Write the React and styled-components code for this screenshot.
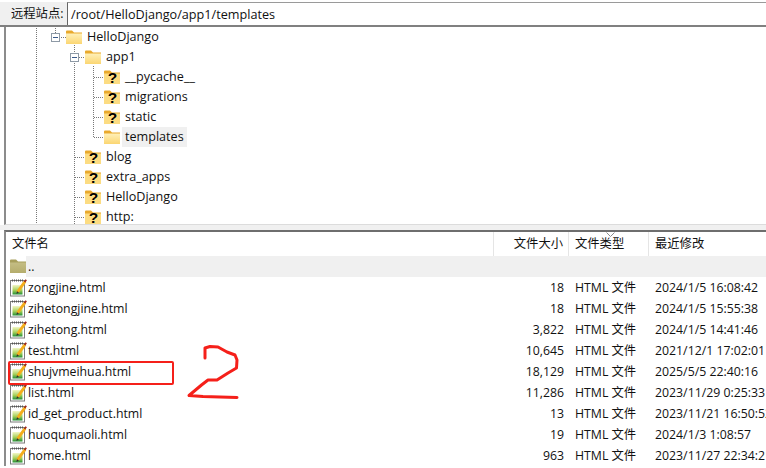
import React from "react";
import styled, { createGlobalStyle } from "styled-components";

const FONT = `"Open Sans", "Noto Sans CJK SC", sans-serif`;

const treeRows = [
  { name: "HelloDjango", depth: 0, icon: "folder" },
  { name: "app1", depth: 1, icon: "folder" },
  { name: "__pycache__", depth: 2, icon: "unknown" },
  { name: "migrations", depth: 2, icon: "unknown" },
  { name: "static", depth: 2, icon: "unknown" },
  { name: "templates", depth: 2, icon: "folder", selected: true },
  { name: "blog", depth: 1, icon: "unknown" },
  { name: "extra_apps", depth: 1, icon: "unknown" },
  { name: "HelloDjango", depth: 1, icon: "unknown" },
  { name: "http:", depth: 1, icon: "unknown" },
];

const files = [
  { name: "zongjine.html", size: "18", date: "2024/1/5 16:08:42" },
  { name: "zihetongjine.html", size: "18", date: "2024/1/5 15:55:38" },
  { name: "zihetong.html", size: "3,822", date: "2024/1/5 14:41:46" },
  { name: "test.html", size: "10,645", date: "2021/12/1 17:02:01" },
  { name: "shujvmeihua.html", size: "18,129", date: "2025/5/5 22:40:16" },
  { name: "list.html", size: "11,286", date: "2023/11/29 0:25:33" },
  { name: "id_get_product.html", size: "13", date: "2023/11/21 16:50:52" },
  { name: "huoqumaoli.html", size: "19", date: "2024/1/3 1:08:57" },
  { name: "home.html", size: "963", date: "2023/11/27 22:34:21" },
];

const FolderIcon = ({ color = "yellow" }) => {
  const olive = color === "olive";
  return (
    <svg width="16" height="14" viewBox="0 0 16 14">
      <defs>
        <linearGradient id={`fold-${color}`} x1="0" y1="0" x2="0" y2="1">
          <stop offset="0" stopColor={olive ? "#c4bd84" : "#fff0b8"} />
          <stop offset="1" stopColor={olive ? "#b5ad6c" : "#fbd672"} />
        </linearGradient>
      </defs>
      <path d="M0 1.5 Q0 .5 1 .5 H6 L8 2.5 H16 V14 H0 Z" fill={olive ? "#a89f5c" : "#e9a92c"} />
      <rect x="0" y="3.5" width="16" height="10.5" fill={`url(#fold-${color})`} />
    </svg>
  );
};

// the question mark is taller than the folder box, so it may spill over the svg edge
const UnknownIcon = () => (
  <UnknownSvg width="16" height="14" viewBox="0 0 16 14">
    <path d="M0 1.5 Q0 .5 1 .5 H6 L8 2.5 H16 V14 H0 Z" fill="#e9a92c" />
    <rect x="0" y="3.5" width="16" height="10.5" fill="#fcdc82" />
    <text x="8.4" y="12.8" textAnchor="middle" fontFamily="Liberation Sans" fontWeight="700" fontSize="15.5" fill="#000">?</text>
  </UnknownSvg>
);

const FileIcon = () => (
  <svg width="17" height="18" viewBox="0 0 17 18">
    <defs>
      <linearGradient id="sheet" x1="0" y1="0" x2="0" y2="1">
        <stop offset="0" stopColor="#f2f6c4" />
        <stop offset="0.55" stopColor="#a6d05a" />
        <stop offset="1" stopColor="#238f34" />
      </linearGradient>
    </defs>
    <rect x="0.5" y="1.5" width="14" height="15.5" fill="#fff" stroke="#7d7d7d" />
    <path d="M2 1.5 H13" stroke="#555" strokeDasharray="1 1" strokeWidth="2" />
    <rect x="2.5" y="6" width="10" height="9.5" fill="url(#sheet)" />
    <path d="M7.5 13 L15 2.5" stroke="#f4ae1c" strokeWidth="3" />
    <path d="M14.6 3 L16.2 .8" stroke="#a02818" strokeWidth="1.8" />
    <path d="M6.4 15 L7 12.2 L9 13.6 Z" fill="#333" />
  </svg>
);

const App = () => {
  return (
    <>
      <GlobalStyle />
      <Page>
        <AddressBar>
          <AddressLabel>远程站点:</AddressLabel>
          <AddressInput>/root/HelloDjango/app1/templates</AddressInput>
        </AddressBar>

        <TreePanel>
          <TreeLines width="300" height="198" viewBox="0 26 300 198">
            <g stroke="#777" strokeDasharray="1 1" fill="none">
              <path d="M36.5 26 V224" />
              <path d="M55.5 26 V33" />
              <path d="M74.5 41 V53 M74.5 61 V224" />
              <path d="M93.5 66 V137" />
              <path d="M59 37.5 H66 M79 57.5 H85" />
              <path d="M94 77.5 H104 M94 97.5 H104 M94 117.5 H104 M94 137.5 H104" />
              <path d="M75 157.5 H85 M75 177.5 H85 M75 197.5 H85 M75 217.5 H85" />
            </g>
            <Expander x={51} y={33} />
            <Expander x={70} y={53} />
          </TreeLines>
          {treeRows.map(({ name, depth, icon, selected }, i) => (
            <TreeRow key={i} $depth={depth}>
              {icon === "folder" ? <FolderIcon /> : <UnknownIcon />}
              <TreeName $selected={selected}>{name}</TreeName>
            </TreeRow>
          ))}
        </TreePanel>

        <Splitter />

        <ListPanel>
          <ListHeader>
            <NameHead>文件名</NameHead>
            <SizeHead>文件大小</SizeHead>
            <TypeHead>
              <SortArrow width="9" height="5" viewBox="0 0 9 5">
                <path d="M.5 .5 L4.5 4.5 L8.5 .5" fill="none" stroke="#8a8a8a" />
              </SortArrow>
              文件类型
            </TypeHead>
            <DateHead>最近修改</DateHead>
          </ListHeader>
          <ParentRow>
            <ParentIcon>
              <FolderIcon color="olive" />
            </ParentIcon>
            <ParentName>..</ParentName>
          </ParentRow>
          {files.map(({ name, size, date }) => (
            <FileRow key={name}>
              <NameCell>
                <FileIcon />
                {name}
              </NameCell>
              <SizeCell>{size}</SizeCell>
              <TypeCell>HTML 文件</TypeCell>
              <DateCell>{date}</DateCell>
            </FileRow>
          ))}
        </ListPanel>

        <RedBox />
        <Scribble width="60" height="60" viewBox="185 342 60 60">
          <path
            d="M205 358 L205 348 L210 346.5 L218 347 L227 352 L235 355 L237 360 L236.5 368 L228 373 L217 380 L208 380 L201.5 385 L189 395.5 L203 396.5 L237 397.5"
            fill="none"
            stroke="#f5201a"
            strokeWidth="3"
            strokeLinejoin="round"
            strokeLinecap="round"
          />
        </Scribble>
      </Page>
    </>
  );
};

const Expander = ({ x, y }) => (
  <g>
    <rect x={x + 0.5} y={y + 0.5} width="8" height="8" fill="#fff" stroke="#8e9aa6" />
    <path d={`M${x + 2} ${y + 4.5} H${x + 7}`} stroke="#3a5a8a" />
  </g>
);

export default App;

const GlobalStyle = createGlobalStyle`
  html, body {
    margin: 0;
    background: #fff;
    overflow: hidden;
  }
`;

const Page = styled.div`
  position: relative;
  width: 766px;
  height: 468px;
  overflow: hidden;
  font-family: ${FONT};
  font-size: 12.3px;
  color: #111;
  background: #fff;
`;

const AddressBar = styled.div`
  display: flex;
  height: 23px;
  margin-top: 2px;
  border-bottom: 2px solid #808080;
  box-sizing: content-box;
`;

const AddressLabel = styled.div`
  width: 67px;
  padding-left: 11px;
  box-sizing: border-box;
  background: #f0f0f0;
  line-height: 24px;
  white-space: nowrap;
`;

const AddressInput = styled.div`
  flex: 1;
  padding-left: 3px;
  border-left: 1px solid #666;
  border-top: 1px solid #9a9a9a;
  font-size: 12.65px;
  line-height: 22px;
`;

const TreePanel = styled.div`
  position: relative;
  height: 197px;
  margin-left: 4px;
  border-left: 2px solid #8c8c8c;
  border-bottom: 1px solid #dcdcdc;
  overflow: hidden;
`;

const TreeLines = styled.svg`
  position: absolute;
  left: -6px;
  top: -1px;
`;

const TreeRow = styled.div`
  position: relative;
  display: flex;
  align-items: center;
  height: 20px;
  padding-left: ${({ $depth }) => 60 + $depth * 19}px;
  font-size: 12.6px;
`;

const UnknownSvg = styled.svg`
  overflow: visible;
`;

const TreeName = styled.span`
  margin-left: 2px;
  padding: 0 3px;
  line-height: 20px;
  background: ${({ $selected }) => ($selected ? "#f0f0f0" : "transparent")};
`;

const Splitter = styled.div`
  height: 5px;
  background: #f0f0f0;
`;

const ListPanel = styled.div`
  margin-left: 4px;
  border-left: 2px solid #8c8c8c;
  border-top: 2px solid #6e6e6e;
`;

const ListHeader = styled.div`
  display: flex;
  height: 24px;
  line-height: 24px;
`;

const HeadCell = styled.div`
  box-sizing: border-box;
  height: 24px;
  white-space: nowrap;
  border-right: 1px solid #e5e5e5;
`;

const NameHead = styled(HeadCell)`
  width: 488px;
  padding-left: 6px;
`;

const SizeHead = styled(HeadCell)`
  width: 75px;
  padding-right: 5px;
  text-align: right;
`;

const TypeHead = styled(HeadCell)`
  position: relative;
  width: 80px;
  padding-left: 6px;
`;

const SortArrow = styled.svg`
  position: absolute;
  left: 37px;
  top: 0;
`;

const DateHead = styled(HeadCell)`
  flex: 1;
  padding-left: 6px;
  border-right: 0;
`;

const ParentRow = styled.div`
  display: flex;
  height: 21px;
  align-items: center;
`;

const ParentIcon = styled.div`
  display: flex;
  width: 20px;
  padding-left: 4px;
  box-sizing: border-box;
  margin-top: -2px;
`;

const ParentName = styled.div`
  flex: 1;
  height: 21px;
  line-height: 21px;
  padding-left: 2px;
  background: #f0f0f0;
`;

const FileRow = styled.div`
  display: flex;
  height: 21px;
  line-height: 21px;
  white-space: nowrap;
`;

const NameCell = styled.div`
  display: flex;
  align-items: center;
  gap: 1px;
  width: 488px;
  padding-left: 4px;
  box-sizing: border-box;
`;

const SizeCell = styled.div`
  width: 75px;
  padding-right: 5px;
  box-sizing: border-box;
  text-align: right;
`;

const TypeCell = styled.div`
  width: 80px;
  padding-left: 6px;
  box-sizing: border-box;
`;

const DateCell = styled.div`
  flex: 1;
  padding-left: 6px;
  overflow: hidden;
`;

const RedBox = styled.div`
  position: absolute;
  left: 8px;
  top: 361px;
  width: 162px;
  height: 20px;
  border: 2px solid #f5201a;
  border-radius: 2px;
`;

const Scribble = styled.svg`
  position: absolute;
  left: 185px;
  top: 342px;
`;
